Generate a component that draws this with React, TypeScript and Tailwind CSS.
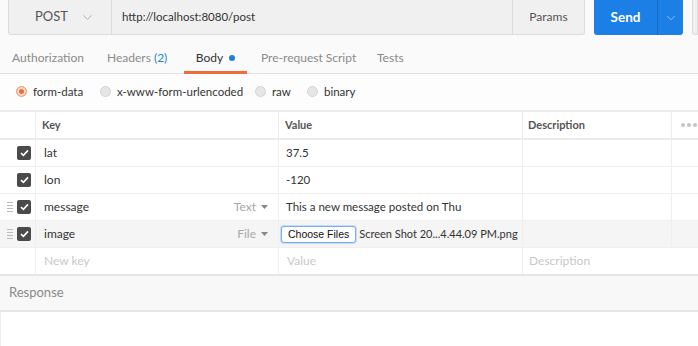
import { ChevronDown } from "lucide-react";

const font = { fontFamily: 'Lato, "Open Sans", sans-serif' };

const rows = [
  { key: "lat", value: "37.5" },
  { key: "lon", value: "-120" },
  { key: "message", value: "This a new message posted on Thu", type: "Text", drag: true },
  { key: "image", value: "", type: "File", drag: true, file: true },
];

function Check() {
  return (
    <span className="flex h-[14px] w-[14px] items-center justify-center rounded-[2px] bg-[#4a4a4a]">
      <svg width="9" height="8" viewBox="0 0 9 8" fill="none">
        <path d="M1 4.2 3.4 6.4 8 1.4" stroke="#fff" strokeWidth="1.6" />
      </svg>
    </span>
  );
}

function Grip() {
  return (
    <span className="flex w-[6px] flex-col gap-[2px]">
      <span className="h-px bg-[#bbb]" />
      <span className="h-px bg-[#bbb]" />
      <span className="h-px bg-[#bbb]" />
      <span className="h-px bg-[#bbb]" />
    </span>
  );
}

function Radio({ on, label, className }: { on?: boolean; label: string; className: string }) {
  return (
    <div className={`flex shrink-0 items-center gap-[6px] ${className}`}>
      <span
        className={`h-[11px] w-[11px] shrink-0 rounded-full border ${
          on ? "border-[#f6a27f] bg-[#f26b3a] ring-2 ring-inset ring-[#fde0d3]" : "border-[#d4d4d4] bg-[#e6e6e6]"
        }`}
      />
      <span className="whitespace-nowrap">{label}</span>
    </div>
  );
}

export default function App() {
  return (
    <div className="h-[346px] w-[698px] overflow-hidden bg-white text-[12px] text-[#333]" style={font}>
      {/* request bar */}
      <div className="flex h-[43px] items-start bg-[#fafafa] pl-2">
        <div className="flex h-[35px] w-[104px] items-center rounded-bl-[3px] border border-t-0 border-[#dcdcdc] bg-[#f0f0f0] pl-[26px] text-[13px] text-[#555]">
          POST
          <ChevronDown className="ml-[12px] text-[#aaa]" size={15} strokeWidth={1.5} />
        </div>
        <div className="flex h-[35px] w-[400px] items-center border-b border-[#dcdcdc] bg-[#f0f0f0] pl-[10px] text-[11.5px] text-[#333]">
          http://localhost:8080/post
        </div>
        <div className="flex h-[35px] w-[73px] items-center justify-center rounded-br-[3px] border border-t-0 border-[#dcdcdc] bg-[#f0f0f0] text-[12px] text-[#555]">
          Params
        </div>
        <div className="ml-[9px] flex h-[35px] w-[89px] overflow-hidden rounded-b-[3px] bg-[#1b7fe5] text-white">
          <div className="flex w-[63px] items-center justify-center text-[13.5px] font-bold">Send</div>
          <div className="flex flex-1 items-center justify-center border-l border-[#1769c0]">
            <ChevronDown size={14} strokeWidth={1.5} className="text-[#9cc7f2]" />
          </div>
        </div>
        <div className="ml-[9px] h-[35px] flex-1 rounded-bl-[3px] border border-t-0 border-[#dcdcdc] bg-[#f0f0f0]" />
      </div>

      {/* tabs */}
      <div className="flex h-[31px] items-start border-b border-[#e2e2e2] bg-[#fafafa] text-[12px] text-[#8a8a8a]">
        <div className="w-[107px] pl-3 pt-[6px]">Authorization</div>
        <div className="w-[77px] pt-[6px]">
          Headers <span className="text-[#1b7fe5]">(2)</span>
        </div>
        <div className="flex h-[31px] w-[63px] flex-col">
          <div className="flex items-center justify-center gap-[6px] pt-[6px] text-[#333]">
            Body <span className="h-[6px] w-[6px] rounded-full bg-[#1b7fe5]" />
          </div>
          <div className="mt-auto h-[3px] bg-[#f26b3a]" />
        </div>
        <div className="w-[130px] pl-[14px] pt-[6px]">Pre-request Script</div>
        <div className="pt-[6px]">Tests</div>
      </div>

      {/* body type */}
      <div className="flex h-[38px] items-center border-b-2 border-[#ececec] bg-[#fdfdfd] pb-px text-[11.5px]">
        <Radio on label="form-data" className="w-[100px] pl-4" />
        <Radio label="x-www-form-urlencoded" className="w-[155px]" />
        <Radio label="raw" className="w-[52px]" />
        <Radio label="binary" className="" />
      </div>

      {/* table */}
      <div className="grid grid-cols-[36px_243px_244px_149px_1fr] text-[12px]">
        <div className="h-[28px] border-r border-b-2 border-[#ececec]" />
        <div className="flex h-[28px] items-center border-r border-b-2 border-[#ececec] pl-[6px] text-[11px] font-bold text-[#555]">Key</div>
        <div className="flex h-[28px] items-center border-r border-b-2 border-[#ececec] pl-[6px] text-[11px] font-bold text-[#555]">Value</div>
        <div className="flex h-[28px] items-center border-r border-b-2 border-[#ececec] pl-[5px] text-[11px] font-bold text-[#555]">Description</div>
        <div className="flex h-[28px] items-center justify-center gap-[2px] border-b-2 border-[#ececec] pl-[8px]">
          <span className="h-[4px] w-[4px] rounded-full bg-[#c4c4c4]" />
          <span className="h-[4px] w-[4px] rounded-full bg-[#c4c4c4]" />
          <span className="h-[4px] w-[4px] rounded-full bg-[#c4c4c4]" />
        </div>

        {rows.map((r) => {
          const bg = r.file ? "bg-[#f5f5f5]" : "bg-white";
          return (
            <div key={r.key} className="contents">
              <div className={`flex h-[27px] items-center justify-between border-r border-b border-[#efefef] pl-[7px] pr-[4px] ${bg}`}>
                {r.drag ? <Grip /> : <span />}
                <Check />
              </div>
              <div className={`flex h-[27px] items-center justify-between border-r border-b border-[#efefef] pl-[8px] pr-[10px] ${bg}`}>
                <span>{r.key}</span>
                {r.type && (
                  <span className="flex items-center gap-[5px] text-[#a8a8a8]">
                    {r.type}
                    <svg width="7" height="4" viewBox="0 0 7 4">
                      <path d="M0 0h7L3.5 4z" fill="#888" />
                    </svg>
                  </span>
                )}
              </div>
              <div className={`flex h-[27px] items-center whitespace-nowrap border-r border-b border-[#efefef] text-[11.5px] ${r.file ? "pl-[2px]" : "pl-[7px]"} ${bg}`}>
                {r.file ? (
                  <>
                    <span
                      className="rounded-[3px] border border-[#7aaef0] bg-white px-[6px] text-[10.5px] leading-[15px] text-[#111] shadow-[0_0_0_1px_#c6dcf8]"
                      style={{ fontFamily: '"Liberation Sans", sans-serif' }}
                    >
                      Choose Files
                    </span>
                    <span className="ml-[3px] text-[11px]">Screen Shot 20...4.44.09 PM.png</span>
                  </>
                ) : (
                  r.value
                )}
              </div>
              <div className={`h-[27px] border-r border-b border-[#efefef] ${bg}`} />
              <div className={`h-[27px] border-b border-[#efefef] ${bg}`} />
            </div>
          );
        })}

        <div className="h-[26px] border-r border-[#efefef]" />
        <div className="flex h-[26px] items-center border-r border-[#efefef] pl-[8px] text-[#c8c8c8]">New key</div>
        <div className="flex h-[26px] items-center border-r border-[#efefef] pl-[8px] text-[#c8c8c8]">Value</div>
        <div className="flex h-[26px] items-center pl-[6px] text-[#c8c8c8]">Description</div>
        <div className="h-[26px]" />
      </div>

      {/* response */}
      <div className="flex h-[38px] items-center border-y-2 border-[#e6e6e6] bg-[#f8f8f8] pl-[9px] text-[13px] text-[#8a8a8a]">
        Response
      </div>
      <div className="h-full border-l border-[#eee] bg-white" />
    </div>
  );
}
